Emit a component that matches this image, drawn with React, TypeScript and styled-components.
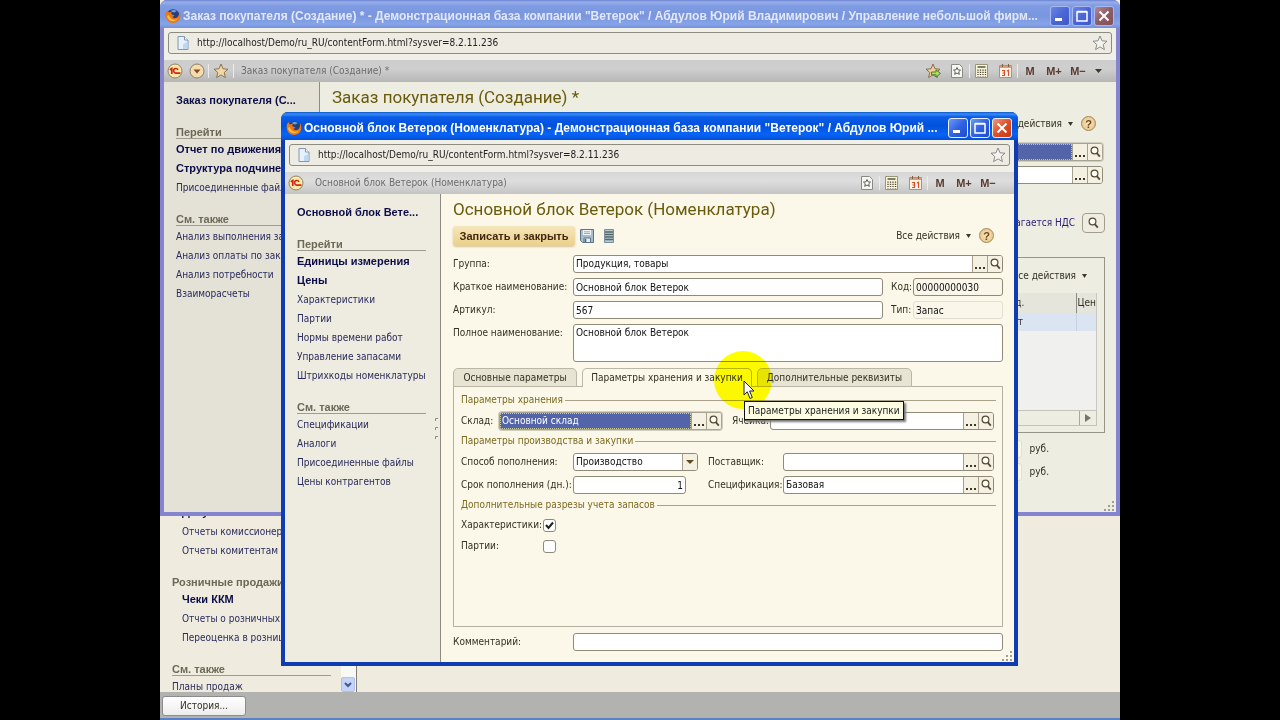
import React from "react";
import styled, { createGlobalStyle, css } from "styled-components";

const ui = `"DejaVu Sans Condensed", "DejaVu Sans", Tahoma, sans-serif`;
const strong = `"Liberation Sans", Arial, sans-serif`;
const display = `Roboto, "Liberation Sans", sans-serif`;

const Global = createGlobalStyle`
  * { box-sizing: border-box; }
  body { margin: 0; background: #000; font: 10px/14px ${ui}; color: #33301f; }
  button, input, select, textarea { font: inherit; color: inherit; margin: 0; padding: 0; }
  svg { display: block; flex: none; }
`;

const Screen = styled.div`
  padding: 0 12.5%;
  min-height: 100vh;
  display: flex;
`;

const Desktop = styled.div`
  position: relative;
  flex: 1;
  min-width: 0;
  min-height: 720px;
  display: flex;
  flex-direction: column;
  overflow: hidden;
  background: #efecdf;
`;

/* ---------- window frame ---------- */

const Frame = styled.section<{ $active?: boolean }>`
  position: absolute;
  display: flex;
  flex-direction: column;
  border: 4px solid ${(p) => (p.$active ? "#0f3cb0" : "#8484cf")};
  border-top: 0;
  border-radius: 7px 7px 0 0;
  background: ${(p) => (p.$active ? "#0f3cb0" : "#8484cf")};
  ${(p) =>
    p.$active
      ? css`inset: 112px 102px 54px 121px;`
      : css`inset: 0 0 204px 0;`}
`;

const TitleBar = styled.header<{ $active?: boolean }>`
  display: flex;
  align-items: center;
  gap: 2px;
  height: 28px;
  margin: 0 -4px;
  padding: 3px 6px 0 5px;
  border-radius: 7px 7px 0 0;
  color: ${(p) => (p.$active ? "#fff" : "#e2e8fa")};
  background: ${(p) =>
    p.$active
      ? "linear-gradient(#0a56c8 0, #3a8cf8 2px, #0a5ce8 5px, #0250dc 14px, #0664f8 22px, #0250d8 28px)"
      : "linear-gradient(#6a80d0 0, #96aeea 2px, #7f9be2 6px, #7a96de 16px, #86a4ea 24px, #7590d8 28px)"};
`;

const WindowTitle = styled.h1`
  flex: 1;
  min-width: 0;
  margin: 0;
  font: bold 12px/16px ${strong};
  white-space: nowrap;
  overflow: hidden;
`;

const Controls = styled.div`
  display: flex;
  gap: 2px;
`;

const ControlButton = styled.button<{ $kind: "plain" | "close"; $active?: boolean }>`
  width: 20px;
  height: 20px;
  display: grid;
  place-items: center;
  border: 1px solid ${(p) => (p.$active ? "#e8eefc" : "#a9b8ee")};
  border-radius: 3px;
  background: ${(p) =>
    p.$kind === "close"
      ? p.$active
        ? "linear-gradient(135deg, #f09a7c, #dd4f2a 50%, #c23c14)"
        : "linear-gradient(135deg, #b08a96, #8c5c66 50%, #845058)"
      : p.$active
      ? "linear-gradient(135deg, #6f9af4, #2f62e4 50%, #1c4ccc)"
      : "linear-gradient(135deg, #6c86e4, #4a66d6 50%, #4058c8)"};
`;

const AddressRow = styled.div`
  padding: 4px 4px 6px;
  background: #f0efe8;
`;

const AddressBox = styled.div`
  display: flex;
  align-items: center;
  height: 22px;
  padding-left: 8px;
  padding-right: 3px;
  gap: 8px;
  border: 1px solid #8d8c80;
  border-radius: 3px;
  background: #edebe2;
`;

const AddressInput = styled.input`
  flex: 1;
  min-width: 0;
  border: 0;
  background: transparent;
  color: #222;
`;

const ToolBar = styled.div<{ $end: number; $active?: boolean }>`
  display: flex;
  align-items: center;
  height: 22px;
  padding-right: ${(p) => p.$end}px;
  background: ${(p) =>
    p.$active ? "linear-gradient(#d6d6d6, #dedede 40%, #c4c4c4)" : "linear-gradient(#cccccc, #cfcfcf 40%, #b6b6b6)"};
`;

const ToolButton = styled.button<{ $w?: number }>`
  width: ${(p) => p.$w ?? 24}px;
  height: 20px;
  display: grid;
  place-items: center;
  border: 0;
  background: none;
  color: #5a3a30;
  font: bold 11px/14px ${strong};
`;

const Divider = styled.span`
  width: 1px;
  height: 14px;
  background: #ececec;
`;

const PageName = styled.span<{ $pad: number }>`
  flex: 1;
  padding-left: ${(p) => p.$pad}px;
  color: #6c6c6c;
  white-space: nowrap;
`;

const Client = styled.div<{ $active?: boolean }>`
  position: relative;
  flex: 1;
  min-height: 0;
  display: flex;
  background: ${(p) => (p.$active ? "#fbf8e9" : "#edede2")};
`;

const Grip = styled.svg`
  position: absolute;
  right: 1px;
  bottom: 1px;
`;

/* ---------- navigation ---------- */

const Side = styled.nav<{ $active?: boolean }>`
  flex: none;
  width: 156px;
  padding: 9px 14px 0 12px;
  border-right: 1px solid #8e8c82;
  background: ${(p) => (p.$active ? "#eeece0" : "#e4e2d7")};
  display: flex;
  flex-direction: column;
`;

const SideHeading = styled.h2<{ $plain?: boolean }>`
  flex: none;
  height: 14px;
  margin: 15px 0 1px;
  font: bold 11px/14px ${strong};
  color: #6c6856;
  white-space: nowrap;
  border-bottom: ${(p) => (p.$plain ? "0" : "1px solid #a09c8c")};
`;

const SideList = styled.ul<{ $indent?: boolean }>`
  flex: none;
  list-style: none;
  margin: 0;
  padding: 0 0 0 ${(p) => (p.$indent ? 10 : 0)}px;
`;

const SideLink = styled.a<{ $bold?: boolean }>`
  display: block;
  white-space: nowrap;
  text-decoration: none;
  color: ${(p) => (p.$bold ? "#0c0c48" : "#2a2a5c")};
  font: ${(p) => (p.$bold ? `bold 11px/19px ${strong}` : `10px/19px ${ui}`)};
`;

const Splitter = styled.svg`
  position: absolute;
  left: 149px;
  top: 222px;
`;

const BackPage = styled.div`
  flex: 1;
  min-height: 0;
  display: flex;
`;

const BackNav = styled.nav`
  width: 181px;
  padding: 0 10px 0 12px;
  display: flex;
  flex-direction: column;
  justify-content: flex-end;
  overflow: hidden;
`;

const BackNavTail = styled.div`
  margin-bottom: -4px;
`;

const ScrollTrack = styled.div`
  width: 16px;
  display: flex;
  align-items: flex-end;
  background: #f8f8f4;
  border-right: 1px solid #807e74;
`;

const ScrollButton = styled.button`
  width: 14px;
  height: 15px;
  display: grid;
  place-items: center;
  border: 1px solid #b0c0ee;
  border-radius: 2px;
  background: #c5d3f8;
`;

const StatusBar = styled.footer`
  height: 28px;
  padding: 4px 2px;
  border-bottom: 2px solid #5b80c4;
  background: #b2b2b0;
`;

const HistoryButton = styled.button`
  display: block;
  width: 84px;
  height: 20px;
  border: 1px solid #8c8c8c;
  border-radius: 3px;
  background: linear-gradient(#fff, #ededed);
`;

/* ---------- form ---------- */

const Main = styled.main`
  flex: 1;
  min-width: 0;
  padding: 5px 11px 11px 12px;
  display: flex;
  flex-direction: column;
`;

const FormTitle = styled.h2`
  margin: 0 0 6px;
  font: 17px/20px ${display};
  color: #6a5a0c;
  white-space: nowrap;
`;

const Commands = styled.div`
  display: flex;
  align-items: center;
  height: 21px;
  margin-bottom: 9px;
`;

const PrimaryButton = styled.button`
  width: 122px;
  height: 20px;
  margin-right: 1px;
  border: 0;
  border-radius: 3px;
  background: linear-gradient(#f6e6ba, #ecd08c);
  box-shadow: 0 1px 2px #d8c494;
  font: bold 11px/14px ${strong};
  color: #40280c;
  white-space: nowrap;
`;

const IconButton = styled.button`
  display: grid;
  place-items: center;
  width: 22px;
  height: 18px;
  border: 0;
  background: none;
`;

const ActionsButton = styled.button`
  margin-left: auto;
  display: flex;
  align-items: center;
  gap: 6px;
  border: 0;
  background: none;
  white-space: nowrap;
`;

const HelpButton = styled.button`
  width: 15px;
  height: 15px;
  margin: 0 9px 0 8px;
  border: 1px solid #a08858;
  border-radius: 50%;
  background: radial-gradient(#fbe6bc, #e4bc80);
  color: #6a4a20;
  font: bold 11px/12px ${strong};
`;

const Rows = styled.div`
  display: flex;
  flex-direction: column;
  gap: 5px;
`;

const Row = styled.div`
  display: flex;
  align-items: center;
`;

const Label = styled.label<{ $w: number; $top?: boolean }>`
  flex: none;
  width: ${(p) => p.$w}px;
  white-space: nowrap;
  ${(p) => p.$top && css`align-self: flex-start; padding-top: 2px;`}
`;

const boxed = css`
  border: 1px solid #8f8b78;
  border-radius: 3px;
  background: #fff;
  color: #111;
`;

const FieldBox = styled.div<{ $w?: number; $focus?: boolean }>`
  ${boxed}
  display: flex;
  height: 18px;
  flex: ${(p) => (p.$w ? `0 0 ${p.$w}px` : "1 1 0")};
  min-width: 0;
  overflow: hidden;
  ${(p) => p.$focus && css`border-color: #a8a494; box-shadow: 0 0 0 1px #cfccc0;`}
`;

const Inner = styled.input<{ $focus?: boolean }>`
  && {
    flex: 1;
    min-width: 0;
    border: 0;
    padding-left: 2px;
    background: transparent;
    ${(p) => p.$focus && css`background: #5464a8; color: #fff; outline: 1px dotted #c8c8a0; outline-offset: -1px;`}
  }
`;

const Mini = styled.button`
  width: 15px;
  border: 0;
  border-left: 1px solid #a5a18e;
  background: #f5f1e2;
  display: grid;
  place-items: center;
  color: #222;
`;

const TextField = styled.input<{ $w?: number; $tone?: "read" | "flat"; $right?: boolean }>`
  ${boxed}
  flex: ${(p) => (p.$w ? `0 0 ${p.$w}px` : "1 1 0")};
  min-width: 0;
  height: 18px;
  && { padding: 0 2px; }
  text-align: ${(p) => (p.$right ? "right" : "left")};
  ${(p) => p.$tone && css`background: #faf7ea;`}
  ${(p) => p.$tone === "flat" && css`border-color: #e2dfd0;`}
`;

const TextArea = styled.textarea`
  ${boxed}
  flex: 1;
  height: 38px;
  && { padding: 1px 2px; }
  resize: none;
`;

const Select = styled.select`
  flex: 1;
  min-width: 0;
  appearance: none;
  border: 0;
  && { padding-left: 2px; }
  background: transparent;
`;

const Spacer = styled.span<{ $w: number }>`
  flex: 0 0 ${(p) => p.$w}px;
`;

const Tabs = styled.div`
  position: relative;
  display: flex;
  gap: 5px;
  margin-top: 6px;
`;

const Tab = styled.button<{ $active?: boolean; $w: number }>`
  width: ${(p) => p.$w}px;
  height: 19px;
  border: 1px solid #bab6a8;
  border-bottom: ${(p) => (p.$active ? "0" : "1px solid #bab6a8")};
  border-radius: 5px 5px 0 0;
  margin-bottom: -1px;
  z-index: 1;
  white-space: nowrap;
  background: ${(p) => (p.$active ? "#fbf8e9" : "#e8e4d4")};
`;

const Panel = styled.div`
  flex: 1;
  padding: 6px 6px 0 7px;
  border: 1px solid #b4b1a2;
`;

const GroupTitle = styled.h3`
  display: flex;
  align-items: center;
  gap: 2px;
  margin: 0;
  height: 14px;
  font: 10px/14px ${ui};
  color: #7c6a20;
  white-space: nowrap;
  &::after {
    content: "";
    flex: 1;
    height: 1px;
    background: #a8a088;
  }
`;

const GroupBody = styled(Rows)`
  margin: 5px 2px 4px 0;
`;

const CheckRow = styled.div`
  display: flex;
  align-items: center;
  height: 16px;
`;

const Check = styled.input`
  appearance: none;
  width: 13px;
  height: 13px;
  border: 1px solid #8f8b78;
  border-radius: 3px;
  background: #fff;
`;

const CheckWrap = styled.span`
  position: relative;
  display: flex;
  svg {
    position: absolute;
    left: 2px;
    top: 2px;
    display: none;
    pointer-events: none;
  }
  input:checked + svg {
    display: block;
  }
`;

const CommentRow = styled(Row)`
  margin-top: 6px;
`;

const Highlight = styled.span`
  position: absolute;
  left: 261px;
  top: -17px;
  width: 58px;
  height: 58px;
  border-radius: 50%;
  background: #ffff00;
  mix-blend-mode: multiply;
  pointer-events: none;
  z-index: 2;
`;

const Cursor = styled.svg`
  position: absolute;
  left: 290px;
  top: 12px;
  z-index: 4;
`;

const Tooltip = styled.span`
  position: absolute;
  left: 291px;
  top: 33px;
  z-index: 3;
  height: 19px;
  padding: 0 3px;
  border: 1px solid #111;
  background: #fdfde4;
  box-shadow: 2px 2px 2px #777;
  color: #222;
  line-height: 17px;
  white-space: nowrap;
`;

/* ---------- order form behind ---------- */

const TaxRow = styled.div`
  display: flex;
  align-items: center;
  justify-content: flex-end;
  gap: 7px;
  margin: 29px 0 24px;
`;

const TaxLink = styled.a`
  color: #2c1c74;
  text-decoration: none;
`;

const SearchButton = styled.button`
  width: 23px;
  height: 20px;
  display: grid;
  place-items: center;
  border: 1px solid #a19e90;
  border-radius: 4px;
  background: #efede2;
`;

const GoodsBox = styled.div`
  height: 176px;
  padding: 9px 7px 6px;
  border: 1px solid #96958a;
  display: flex;
  flex-direction: column;
`;

const GoodsActions = styled.div`
  display: flex;
  height: 18px;
  margin: 0 10px 8px 0;
`;

const GoodsArea = styled.div`
  flex: 1;
  background: #f0f0ee;
  border-right: 1px solid #c8c8c2;
`;

const Goods = styled.table`
  width: 100%;
  table-layout: fixed;
  border-collapse: collapse;
  th {
    height: 20px;
    padding: 0 0 0 1px;
    font-weight: normal;
    text-align: left;
    background: #e6e5dc;
    border-left: 1px solid #8e8c82;
    white-space: nowrap;
  }
  td {
    height: 18px;
    padding: 0 0 0 1px;
    background: #dbe5f2;
    border-left: 1px solid #c8d2de;
  }
  th:nth-child(2),
  td:nth-child(2) {
    padding-left: 8px;
  }
`;

const HScroll = styled.div`
  display: flex;
  justify-content: flex-end;
  height: 16px;
  border: 1px solid #c4c3ba;
`;

const HScrollButton = styled.button`
  width: 17px;
  border: 0;
  border-left: 1px solid #a9a89c;
  background: none;
  display: grid;
  place-items: center;
`;

const Totals = styled(Rows)`
  margin-top: 7px;
`;

const TotalRow = styled.label`
  display: flex;
  align-items: center;
  justify-content: flex-end;
  gap: 8px;
  padding-right: 56px;
`;

/* ---------- icons ---------- */

const Firefox = () => (
  <svg width="16" height="16" viewBox="0 0 16 16">
    <circle cx="8" cy="7.6" r="6.4" fill="#23407c" />
    <path d="M6 2.500c2-1 4.500-.6 5.600.8L9.500 4.500 7 4z" fill="#6ea0d8" />
    <path d="M1.200 3C.2 6 .3 10 2.800 12.700 5.500 15.500 10.600 15.700 13.500 12.800 15.900 10.300 16 6 14 3.300 14.400 6 13.600 8.800 11.500 9.800 9.500 10.700 7.600 9.800 6.800 8.600c1 .3 2.200-.3 2.600-1.200C8.400 7.300 7.800 6.500 6.500 6.200 6 5 6.500 4.500 7.200 3.800 5.800 3.400 4.800 3.900 4 4.600 3.300 4.200 3 3.200 3.100 2.100 2.300 2.500 1.800 3.200 1.500 4z" fill="#e8781c" />
    <path d="M2 8c.5 3 3 5.300 6 5.200 2.600 0 4.500-1.600 5.300-3.500-1.300 1.900-3.500 2.600-5.500 1.900C5.500 10.900 5 9 3.500 7z" fill="#f8bc40" />
  </svg>
);

const PageIcon = () => (
  <svg width="12" height="14" viewBox="0 0 12 14">
    <path d="M1 .5h6.500l3.500 3.500v9.500H1z" fill="#e6f1fb" stroke="#7f98b4" />
    <path d="M7.500.5v3.500H11" fill="#fff" stroke="#7f98b4" />
    <path d="M6 13V8l4.500-2v7z" fill="#bcd8f2" />
  </svg>
);

const starPath = "M8 1l2 4.800 5 .4-3.800 3.400 1.200 5L8 11.900l-4.400 2.700 1.200-5L1 6.200l5-.4z";

const Star = ({ fill = "#f4f3ee", stroke = "#8c8c90", size = 16 }) => (
  <svg width={size} height={size} viewBox="0 0 16 16">
    <path d={starPath} fill={fill} stroke={stroke} strokeLinejoin="round" />
  </svg>
);

const OneC = () => (
  <svg width="16" height="16" viewBox="0 0 16 16">
    <circle cx="8" cy="8" r="7" fill="#fbe9a8" stroke="#8f8468" />
    <path d="M2.800 6.800l2-1.300V11" fill="none" stroke="#d02818" strokeWidth="1.700" />
    <path d="M11 6.800A2.300 2.300 0 1 0 9 10.100H13.500" fill="none" stroke="#d02818" strokeWidth="1.600" />
  </svg>
);

const RoundDown = () => (
  <svg width="16" height="16" viewBox="0 0 16 16">
    <circle cx="8" cy="8" r="7" fill="#f4dcae" stroke="#8f8060" />
    <path d="M4.500 6.500h7L8 10.500z" fill="#7c4a24" />
  </svg>
);

const StarArrow = () => (
  <svg width="16" height="16" viewBox="0 0 16 16">
    <path d={starPath} fill="#f0cf9c" stroke="#8a6f4c" strokeLinejoin="round" />
    <path d="M6.500 9H11V6.800L15.500 10.500 11 14v-2.200H6.500z" fill="#b4dc64" stroke="#4c7c24" />
  </svg>
);

const PageStar = () => (
  <svg width="12" height="14" viewBox="0 0 12 14">
    <path d="M.5.5h8l3 3v10H.5z" fill="#f6f6f2" stroke="#8a8a84" />
    <path d="M6 3.500l1.100 2.400 2.400.2-1.800 1.700.6 2.500L6 9l-2.300 1.300.6-2.500L2.500 6.100l2.400-.2z" fill="#fff" stroke="#5c5c54" />
  </svg>
);

const Calc = () => (
  <svg width="13" height="14" viewBox="0 0 13 14">
    <path d="M.5.5h12v13H.5z" fill="#faf4d8" stroke="#9c9478" />
    <path d="M2.500 3h8" stroke="#4c5c40" strokeWidth="1.500" />
    <path d="M3 5.500v7M5.500 5.500v7M8 5.500v7M10.500 5.500v7" stroke="#4c4434" strokeWidth="1.300" strokeDasharray="1.200 1" />
  </svg>
);

const CalendarIcon = () => (
  <svg width="13" height="14" viewBox="0 0 13 14">
    <path d="M.5 1.500h12v12H.5z" fill="#fff4e4" stroke="#b89068" />
    <path d="M1 2h11v2H1z" fill="#dc9c74" />
    <path d="M3.500 0v3M9.500 0v3" stroke="#7c5c44" />
    <path d="M3 6.500h2.500v5H3M3.500 9h2M8 7l1.500-.8v5.800" fill="none" stroke="#d45030" strokeWidth="1.200" />
  </svg>
);

const Caret = ({ color = "#40382c", w = 5 }) => (
  <svg width={w} height="4" viewBox="0 0 6 4" preserveAspectRatio="none">
    <path d="M0 0h6L3 4z" fill={color} />
  </svg>
);

const Lens = () => (
  <svg width="11" height="12" viewBox="0 0 11 12">
    <circle cx="4.500" cy="4.500" r="3.400" fill="#fffdf4" stroke="#544c34" strokeWidth="1.200" />
    <path d="M6.800 7.200l3 3.500" stroke="#544c34" strokeWidth="1.800" />
  </svg>
);

const Dots = () => (
  <svg width="10" height="9" viewBox="0 0 10 9">
    <path d="M0 7h2v2H0zM4 7h2v2H4zM8 7h2v2H8z" fill="#3c3828" />
  </svg>
);

const Disk = () => (
  <svg width="14" height="14" viewBox="0 0 14 14">
    <path d="M.5.5h13v13H2.500l-2-2z" fill="#a9bccc" stroke="#5c7488" />
    <path d="M3 1h8v5H3z" fill="#f2f6f8" />
    <path d="M4 2.800h6M4 4.500h6" stroke="#9cacb8" />
    <path d="M4 9h6.500v4.500H4z" fill="#e8eef2" stroke="#5c7488" />
    <path d="M5.500 10v3" stroke="#4c6070" strokeWidth="1.500" />
  </svg>
);

const ListIcon = () => (
  <svg width="10" height="14" viewBox="0 0 10 14">
    <path d="M.5.500h9v13h-9z" fill="#b4c8d0" stroke="#7c909c" />
    <path d="M1 3h8M1 5.500h8M1 8h8M1 10.500h8" stroke="#54686c" strokeWidth="1.300" />
  </svg>
);

const GripIcon = () => (
  <Grip width="11" height="11" viewBox="0 0 11 11">
    <path
      d="M8 1h2v2H8zM8 5h2v2H8zM4 5h2v2H4zM8 9h2v2H8zM4 9h2v2H4zM0 9h2v2H0z"
      fill="#a09e90"
    />
  </Grip>
);

const BrowserWindow = ({
  active,
  title,
  page,
  children,
}: {
  active?: boolean;
  title: string;
  page: string;
  children: React.ReactNode;
}) => (
  <Frame $active={active} aria-label={page}>
    <TitleBar $active={active}>
      <Firefox />
      <WindowTitle>{title}</WindowTitle>
      <Controls>
        <ControlButton $kind="plain" $active={active} aria-label="Свернуть">
          <svg width="12" height="12" viewBox="0 0 12 12"><path d="M1 8h7v3H1z" fill="#fff" /></svg>
        </ControlButton>
        <ControlButton $kind="plain" $active={active} aria-label="Развернуть">
          <svg width="12" height="12" viewBox="0 0 12 12"><path d="M1 2h10v9H1zM1 1.500h10" fill="none" stroke="#fff" strokeWidth="1.500" /></svg>
        </ControlButton>
        <ControlButton $kind="close" $active={active} aria-label="Закрыть">
          <svg width="12" height="12" viewBox="0 0 12 12"><path d="M1.500 1.500l9 9M10.500 1.500l-9 9" stroke="#fff" strokeWidth="2" /></svg>
        </ControlButton>
      </Controls>
    </TitleBar>
    <AddressRow>
      <AddressBox>
        <PageIcon />
        <AddressInput
          aria-label="Адрес"
          defaultValue="http://localhost/Demo/ru_RU/contentForm.html?sysver=8.2.11.236"
        />
        <Star />
      </AddressBox>
    </AddressRow>
    <ToolBar $end={active ? 14 : 10} $active={active}>
      <ToolButton $w={22} aria-label="Главное меню"><OneC /></ToolButton>
      {!active && (
        <>
          <ToolButton $w={22} aria-label="Меню"><RoundDown /></ToolButton>
          <Divider />
          <ToolButton aria-label="Избранное"><Star fill="#f2d8a4" stroke="#8c7450" /></ToolButton>
          <Divider />
        </>
      )}
      <PageName $pad={active ? 8 : 7}>{page}</PageName>
      {!active && <ToolButton aria-label="Добавить в избранное"><StarArrow /></ToolButton>}
      <ToolButton aria-label="Ссылка"><PageStar /></ToolButton>
      <Divider />
      <ToolButton $w={23} aria-label="Калькулятор"><Calc /></ToolButton>
      <ToolButton aria-label="Календарь"><CalendarIcon /></ToolButton>
      <Divider />
      <ToolButton>M</ToolButton>
      <ToolButton>M+</ToolButton>
      <ToolButton>M−</ToolButton>
      {!active && <ToolButton $w={16} aria-label="Ещё"><Caret w={7} /></ToolButton>}
    </ToolBar>
    <Client $active={active}>
      {children}
      <GripIcon />
    </Client>
  </Frame>
);

type Item = string | { bold: string };

const Links = ({ items, indent }: { items: Item[]; indent?: boolean }) => (
  <SideList $indent={indent}>
    {items.map((item) => {
      const bold = typeof item !== "string";
      const text = typeof item === "string" ? item : item.bold;
      return (
        <li key={text}>
          <SideLink href="#" $bold={bold}>{text}</SideLink>
        </li>
      );
    })}
  </SideList>
);

const PickField = ({
  id,
  value = "",
  w,
  focus,
  label,
}: {
  id?: string;
  value?: string;
  w?: number;
  focus?: boolean;
  label?: string;
}) => (
  <FieldBox $w={w} $focus={focus}>
    <Inner id={id} aria-label={label} defaultValue={value} $focus={focus} />
    <Mini aria-label="Выбрать"><Dots /></Mini>
    <Mini aria-label="Открыть"><Lens /></Mini>
  </FieldBox>
);

const PickRow = ({ label, focus }: { label: string; focus?: boolean }) => (
  <Row>
    <Spacer $w={300} />
    <PickField label={label} focus={focus} />
    <Spacer $w={2} />
  </Row>
);

const OrderWindow = () => (
  <BrowserWindow
    title={'Заказ покупателя (Создание) * - Демонстрационная база компании "Ветерок" / Абдулов Юрий Владимирович / Управление небольшой фирм...'}
    page="Заказ покупателя (Создание) *"
  >
    <Side>
      <SideLink href="#" $bold>Заказ покупателя (С...</SideLink>
      <SideHeading>Перейти</SideHeading>
      <Links items={[{ bold: "Отчет по движениям" }, { bold: "Структура подчинения" }, "Присоединенные файлы"]} />
      <SideHeading>См. также</SideHeading>
      <Links items={["Анализ выполнения заказа", "Анализ оплаты по заказу", "Анализ потребности", "Взаиморасчеты"]} />
    </Side>
    <Main>
      <FormTitle>Заказ покупателя (Создание) *</FormTitle>
      <Commands>
        <ActionsButton>Все действия <Caret /></ActionsButton>
        <HelpButton>?</HelpButton>
      </Commands>
      <Rows>
        <PickRow label="Контрагент" focus />
        <PickRow label="Договор" />
      </Rows>
      <TaxRow>
        <TaxLink href="#">Не облагается НДС</TaxLink>
        <SearchButton aria-label="Открыть"><Lens /></SearchButton>
      </TaxRow>
      <GoodsBox>
        <GoodsActions>
          <ActionsButton>Все действия <Caret /></ActionsButton>
        </GoodsActions>
        <GoodsArea>
          <Goods>
            <colgroup>
              <col />
              <col width="75" />
              <col width="20" />
            </colgroup>
            <thead>
              <tr><th /><th>Ед.</th><th>Цен</th></tr>
            </thead>
            <tbody>
              <tr><td /><td>шт</td><td /></tr>
            </tbody>
          </Goods>
        </GoodsArea>
        <HScroll>
          <HScrollButton aria-label="Вправо">
            <svg width="6" height="8" viewBox="0 0 6 8"><path d="M0 0l6 4-6 4z" fill="#77766c" /></svg>
          </HScrollButton>
        </HScroll>
      </GoodsBox>
      <Totals>
        <TotalRow><TextField $w={90} $tone="flat" $right defaultValue="0" />руб.</TotalRow>
        <TotalRow><TextField $w={90} $tone="flat" $right defaultValue="0" />руб.</TotalRow>
      </Totals>
    </Main>
  </BrowserWindow>
);

const ItemWindow = () => (
  <BrowserWindow
    active
    title={'Основной блок Ветерок (Номенклатура) - Демонстрационная база компании "Ветерок" / Абдулов Юрий ...'}
    page="Основной блок Ветерок (Номенклатура)"
  >
    <Side $active>
      <SideLink href="#" $bold>Основной блок Вете...</SideLink>
      <SideHeading>Перейти</SideHeading>
      <Links
        items={[
          { bold: "Единицы измерения" },
          { bold: "Цены" },
          "Характеристики",
          "Партии",
          "Нормы времени работ",
          "Управление запасами",
          "Штрихкоды номенклатуры",
        ]}
      />
      <SideHeading>См. также</SideHeading>
      <Links items={["Спецификации", "Аналоги", "Присоединенные файлы", "Цены контрагентов"]} />
    </Side>
    <Splitter width="6" height="24" viewBox="0 0 6 24">
      <path d="M1.500 5V2.500H4M1.500 14v-2.500H4M1.500 23v-2.500H4" fill="none" stroke="#8e8c80" />
    </Splitter>
    <Main>
      <FormTitle>Основной блок Ветерок (Номенклатура)</FormTitle>
      <Commands>
        <PrimaryButton>Записать и закрыть</PrimaryButton>
        <IconButton aria-label="Записать"><Disk /></IconButton>
        <IconButton aria-label="Список"><ListIcon /></IconButton>
        <ActionsButton>Все действия <Caret /></ActionsButton>
        <HelpButton>?</HelpButton>
      </Commands>
      <Rows>
        <Row>
          <Label $w={120} htmlFor="group">Группа:</Label>
          <PickField id="group" value="Продукция, товары" />
        </Row>
        <Row>
          <Label $w={120} htmlFor="short">Краткое наименование:</Label>
          <TextField id="short" defaultValue="Основной блок Ветерок" />
          <Spacer $w={8} />
          <Label $w={22} htmlFor="code">Код:</Label>
          <TextField id="code" $w={90} $tone="read" defaultValue="00000000030" />
        </Row>
        <Row>
          <Label $w={120} htmlFor="article">Артикул:</Label>
          <TextField id="article" defaultValue="567" />
          <Spacer $w={8} />
          <Label $w={22} htmlFor="kind">Тип:</Label>
          <TextField id="kind" $w={90} $tone="flat" defaultValue="Запас" />
        </Row>
        <Row>
          <Label $w={120} $top htmlFor="full">Полное наименование:</Label>
          <TextArea id="full" defaultValue="Основной блок Ветерок" />
        </Row>
      </Rows>
      <Tabs role="tablist">
        <Tab $w={124} role="tab">Основные параметры</Tab>
        <Tab $w={170} $active role="tab" aria-selected>Параметры хранения и закупки</Tab>
        <Tab $w={155} role="tab">Дополнительные реквизиты</Tab>
        <Highlight />
        <Cursor width="12" height="20" viewBox="0 0 12 20">
          <path d="M1 1v14l3.300-3.200L7 18.500l2.300-1L6.600 11H11z" fill="#fff" stroke="#222" />
        </Cursor>
        <Tooltip role="tooltip">Параметры хранения и закупки</Tooltip>
      </Tabs>
      <Panel role="tabpanel">
        <GroupTitle>Параметры хранения</GroupTitle>
        <GroupBody>
          <Row>
            <Label $w={38} htmlFor="store">Склад:</Label>
            <PickField id="store" w={223} focus value="Основной склад" />
            <Spacer $w={10} />
            <Label $w={38} htmlFor="cell">Ячейка:</Label>
            <PickField id="cell" />
          </Row>
        </GroupBody>
        <GroupTitle>Параметры производства и закупки</GroupTitle>
        <GroupBody>
          <Row>
            <Label $w={112} htmlFor="method">Способ пополнения:</Label>
            <FieldBox $w={125}>
              <Select id="method" defaultValue="make">
                <option value="make">Производство</option>
              </Select>
              <Mini aria-label="Раскрыть"><Caret w={8} color="#5c4c1c" /></Mini>
            </FieldBox>
            <Spacer $w={10} />
            <Label $w={75} htmlFor="supplier">Поставщик:</Label>
            <PickField id="supplier" />
          </Row>
          <Row>
            <Label $w={112} htmlFor="term">Срок пополнения (дн.):</Label>
            <TextField id="term" $w={113} $right defaultValue="1" />
            <Spacer $w={22} />
            <Label $w={75} htmlFor="spec">Спецификация:</Label>
            <PickField id="spec" value="Базовая" />
          </Row>
        </GroupBody>
        <GroupTitle>Дополнительные разрезы учета запасов</GroupTitle>
        <GroupBody>
          <CheckRow>
            <Label $w={82} htmlFor="traits">Характеристики:</Label>
            <CheckWrap>
              <Check type="checkbox" id="traits" defaultChecked />
              <svg width="9" height="9" viewBox="0 0 9 9"><path d="M1 4l2.500 3L8 1.500" fill="none" stroke="#222" strokeWidth="2" /></svg>
            </CheckWrap>
          </CheckRow>
          <CheckRow>
            <Label $w={82} htmlFor="lots">Партии:</Label>
            <CheckWrap>
              <Check type="checkbox" id="lots" />
              <svg width="9" height="9" viewBox="0 0 9 9"><path d="M1 4l2.500 3L8 1.500" fill="none" stroke="#222" strokeWidth="2" /></svg>
            </CheckWrap>
          </CheckRow>
        </GroupBody>
      </Panel>
      <CommentRow>
        <Label $w={120} htmlFor="comment">Комментарий:</Label>
        <TextField id="comment" />
      </CommentRow>
    </Main>
  </BrowserWindow>
);

export default function App() {
  return (
    <>
      <Global />
      <Screen>
        <Desktop>
          <BackPage>
            <BackNav>
              <Links indent items={[{ bold: "Документы по комиссии" }, "Отчеты комиссионеров", "Отчеты комитентам"]} />
              <SideHeading $plain>Розничные продажи</SideHeading>
              <Links indent items={[{ bold: "Чеки ККМ" }, "Отчеты о розничных", "Переоценка в рознице"]} />
              <SideHeading>См. также</SideHeading>
              <BackNavTail>
                <Links items={["Планы продаж"]} />
              </BackNavTail>
            </BackNav>
            <ScrollTrack>
              <ScrollButton aria-label="Вниз">
                <svg width="8" height="6" viewBox="0 0 8 6"><path d="M1 1l3 3 3-3" fill="none" stroke="#40588c" strokeWidth="2" /></svg>
              </ScrollButton>
            </ScrollTrack>
          </BackPage>
          <StatusBar>
            <HistoryButton>История...</HistoryButton>
          </StatusBar>
          <OrderWindow />
          <ItemWindow />
        </Desktop>
      </Screen>
    </>
  );
}
